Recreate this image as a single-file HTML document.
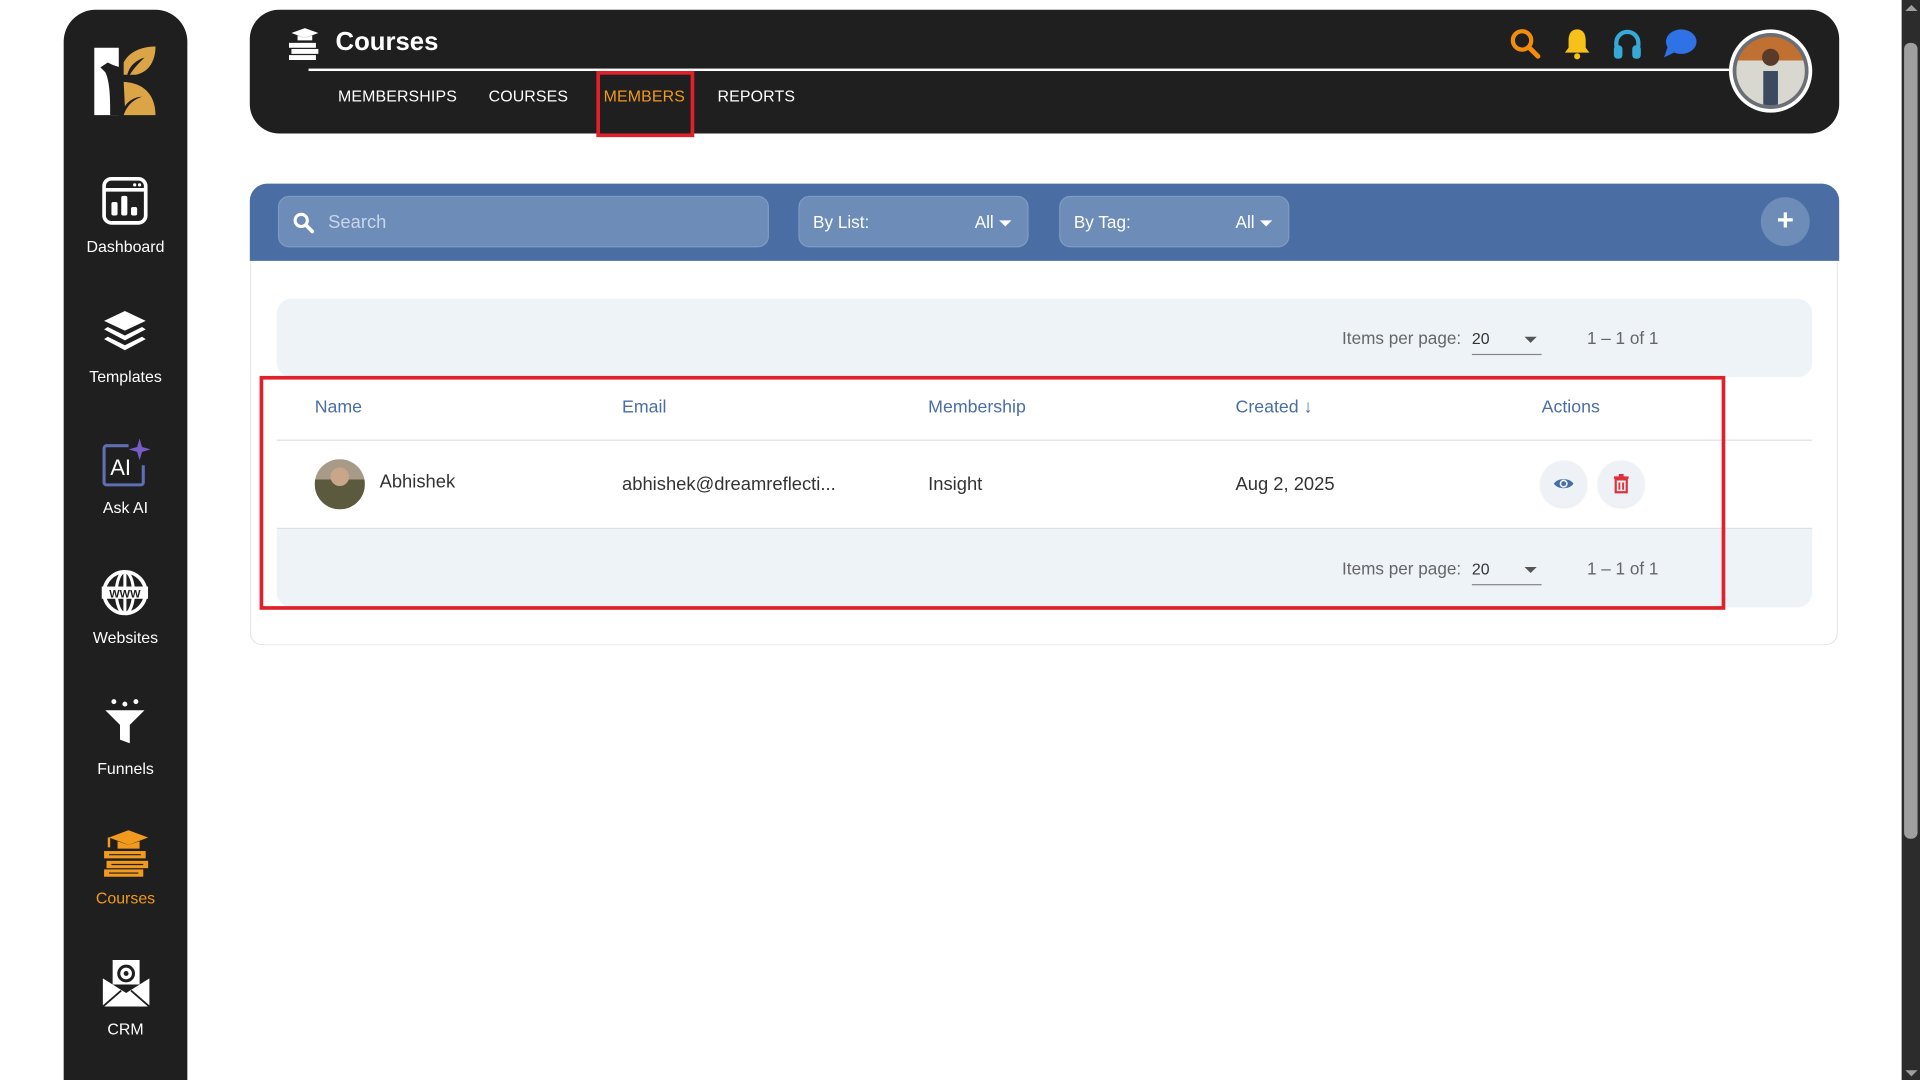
<!DOCTYPE html>
<html><head><meta charset="utf-8">
<style>
html,body{margin:0;padding:0;width:1920px;height:1080px;overflow:hidden;background:#fff;font-family:"Liberation Sans",sans-serif;}
#w{position:absolute;left:0;top:0;width:1568px;height:882px;transform:scale(1.22449);transform-origin:0 0;background:#fff;overflow:hidden;}
.a{position:absolute;}
.side{left:52px;top:8px;width:101px;height:900px;background:#1f1f1f;border-radius:26px 26px 0 0;}
.nl{position:absolute;left:52px;width:101px;text-align:center;color:#fff;font-size:13px;}
.hdr{left:204px;top:8px;width:1298px;height:101px;background:#1f1f1f;border-radius:24px;}
.tab{position:absolute;top:71px;color:#fff;font-size:13px;letter-spacing:0.1px;}
.bar{left:204px;top:150px;width:1298px;height:63px;background:#4a6ea4;border-radius:14px 14px 0 0;}
.fld{position:absolute;top:160px;height:42px;background:#6d8cb8;border:1px solid #7e9bc3;border-radius:9px;box-sizing:border-box;color:#fff;font-size:14px;}
.card{left:204px;top:213px;width:1297px;height:314px;border:1px solid #e6e8eb;border-top:none;border-radius:0 0 10px 10px;box-sizing:border-box;}
.pg{position:absolute;left:226px;width:1254px;height:64px;background:#eef3f7;border-radius:12px;}
.pt{position:absolute;font-size:14px;color:#666;}
.th{position:absolute;top:325px;font-size:14.5px;color:#4a6ea4;}
.td{position:absolute;top:387px;font-size:15px;color:#333;}
.hl{position:absolute;left:226px;width:1254px;height:1px;background:#e0e0e0;}
</style></head><body><div id="w">
<div class="a side"></div>
<svg class="a" style="left:76px;top:37px" width="54" height="58" viewBox="0 0 54 58">
<rect x="1" y="2" width="20" height="55" fill="#fff"/>
<path d="M6 18 L12 14 L16 16 L22 18 L22 57 L14 57 C14 45 14 30 10 22 Z" fill="#1f1f1f"/>
<path d="M25 14 C30 4 42 1 51 1 C51 12 46 22 35 24 L30 24 C34 18 38 14 42 10 C36 12 30 16 28 24 L25 24 Z" fill="#dba446"/>
<path d="M25 30 C36 30 51 36 51 57 L25 57 C28 48 34 44 40 42 C34 42 28 46 26 50 Z" fill="#dba446"/>
</svg>
<svg class="a" style="left:83px;top:144px" width="38" height="40" viewBox="0 0 38 40"><rect x="2" y="2" width="34" height="36" rx="6" fill="none" stroke="#fff" stroke-width="3"/><line x1="2" y1="11" x2="36" y2="11" stroke="#fff" stroke-width="3"/><circle cx="27" cy="7" r="1.3" fill="#fff"/><circle cx="31" cy="7" r="1.3" fill="#fff"/><rect x="8" y="21" width="5" height="11" rx="1.5" fill="#fff"/><rect x="16" y="16" width="5" height="16" rx="1.5" fill="#fff"/><rect x="24" y="25" width="5" height="7" rx="1.5" fill="#fff"/></svg>
<div class="nl" style="top:194px">Dashboard</div>
<svg class="a" style="left:84px;top:253px" width="36" height="34" viewBox="0 0 36 34"><path d="M18 1 L35 9 L18 17 L1 9Z" fill="#fff"/><path d="M4 14 L18 21 L32 14 L35 16 L18 25 L1 16Z" fill="#fff"/><path d="M4 22 L18 29 L32 22 L35 24 L18 33 L1 24Z" fill="#fff"/></svg>
<div class="nl" style="top:300px">Templates</div>
<svg class="a" style="left:83px;top:358px" width="40" height="40" viewBox="0 0 40 40"><path d="M22 6 H4 A2 2 0 0 0 2 8 V36 A2 2 0 0 0 4 38 H32 A2 2 0 0 0 34 36 V22" fill="none" stroke="#5f6fb4" stroke-width="2.5"/><text x="7" y="30" font-family="Liberation Sans" font-size="18" fill="#fff">AI</text><path d="M31 0 L33 7 L40 9 L33 11 L31 18 L29 11 L22 9 L29 7Z" fill="#7a5cc9"/></svg>
<div class="nl" style="top:407px">Ask AI</div>
<svg class="a" style="left:83px;top:465px" width="38" height="38" viewBox="0 0 38 38"><circle cx="19" cy="19" r="17" fill="none" stroke="#fff" stroke-width="3"/><ellipse cx="19" cy="19" rx="7" ry="17" fill="none" stroke="#fff" stroke-width="2.5"/><line x1="19" y1="2" x2="19" y2="36" stroke="#fff" stroke-width="2.5"/><rect x="0" y="14" width="38" height="10" fill="#fff"/><text x="19" y="23" text-anchor="middle" font-family="Liberation Sans" font-weight="bold" font-size="9" fill="#1f1f1f">WWW</text></svg>
<div class="nl" style="top:513px">Websites</div>
<svg class="a" style="left:85px;top:570px" width="34" height="38" viewBox="0 0 34 38"><circle cx="8" cy="3" r="2" fill="#fff"/><circle cx="17" cy="5" r="2" fill="#fff"/><circle cx="26" cy="3" r="2" fill="#fff"/><path d="M1 10 H33 L21 22 V37 L13 34 V22Z" fill="#fff"/></svg>
<div class="nl" style="top:620px">Funnels</div>
<svg class="a" style="left:83px;top:677px" width="40" height="40" viewBox="0 0 40 40"><path d="M6 7 L22 1 L38 7 L22 13Z" fill="#f29a1e"/><path d="M13 10 V16 H31 V10 L22 13Z" fill="#f29a1e"/><line x1="6" y1="7" x2="6" y2="15" stroke="#f29a1e" stroke-width="2"/><rect x="2" y="18" width="34" height="6" fill="#f29a1e"/><rect x="4" y="26" width="34" height="6" fill="#f29a1e"/><rect x="2" y="33" width="32" height="6" fill="#f29a1e"/><line x1="6" y1="21" x2="32" y2="21" stroke="#1f1f1f"/><line x1="8" y1="29" x2="34" y2="29" stroke="#1f1f1f"/><line x1="6" y1="36" x2="30" y2="36" stroke="#1f1f1f"/></svg>
<div class="nl" style="top:726px;color:#f29a1e">Courses</div>
<svg class="a" style="left:83px;top:783px" width="40" height="40" viewBox="0 0 40 40"><rect x="9" y="1" width="22" height="20" fill="#fff"/><circle cx="20" cy="12" r="6" fill="none" stroke="#1f1f1f" stroke-width="2.5"/><circle cx="20" cy="12" r="2" fill="#1f1f1f"/><path d="M1 16 L20 28 L39 16 V39 H1Z" fill="#fff"/><path d="M1 39 L16 26 M39 39 L24 26" stroke="#1f1f1f" stroke-width="1.5"/></svg>
<div class="nl" style="top:833px">CRM</div>

<div class="a hdr"></div>
<svg class="a" style="left:234px;top:22px" width="28" height="28" viewBox="0 0 28 28"><path d="M4 5 L15 1 L26 5 L15 9Z" fill="#fff"/><path d="M9 7 V11 H21 V7 L15 9Z" fill="#fff"/><rect x="2" y="13" width="22" height="4" fill="#fff"/><rect x="4" y="18" width="22" height="4" fill="#fff"/><rect x="2" y="23" width="22" height="4" fill="#fff"/></svg>
<div class="a" style="left:274px;top:23px;color:#fff;font-size:21px;font-weight:bold">Courses</div>
<div class="a" style="left:252px;top:56px;width:1165px;height:2px;background:#fff"></div>
<div class="tab" style="left:276px">MEMBERSHIPS</div>
<div class="tab" style="left:399px">COURSES</div>
<div class="tab" style="left:493px;color:#f29a1e">MEMBERS</div>
<div class="tab" style="left:586px">REPORTS</div>
<div class="a" style="left:487px;top:58px;width:80px;height:54px;border:3px solid #e0202a;box-sizing:border-box"></div>
<svg class="a" style="left:1233px;top:23px" width="26" height="26" viewBox="0 0 26 26"><circle cx="10" cy="10" r="7.5" fill="none" stroke="#f28c0f" stroke-width="3.5"/><line x1="15.5" y1="15.5" x2="23" y2="23" stroke="#f28c0f" stroke-width="4" stroke-linecap="round"/></svg>
<svg class="a" style="left:1277px;top:23px" width="22" height="26" viewBox="0 0 22 26"><path d="M11 1 C6 1 4 5 4 10 V16 L1 20 H21 L18 16 V10 C18 5 16 1 11 1Z" fill="#f5c11a"/><circle cx="11" cy="23" r="2.5" fill="#f5c11a"/></svg>
<svg class="a" style="left:1317px;top:23px" width="24" height="26" viewBox="0 0 24 26"><path d="M3 15 V12 A9 9 0 0 1 21 12 V15" fill="none" stroke="#36a9d9" stroke-width="3.5"/><rect x="1" y="14" width="7" height="11" rx="3" fill="#36a9d9"/><rect x="16" y="14" width="7" height="11" rx="3" fill="#36a9d9"/></svg>
<svg class="a" style="left:1358px;top:23px" width="28" height="26" viewBox="0 0 28 26"><ellipse cx="15" cy="11" rx="12.5" ry="10" fill="#2f72e6"/><path d="M4 15 L1 24 L11 19Z" fill="#2f72e6"/></svg>
<div class="a" style="left:1412px;top:24px;width:68px;height:68px;border-radius:50%;background:#fff"></div>
<div class="a" style="left:1415px;top:27px;width:62px;height:62px;border-radius:50%;background:#6b6f75"></div>
<div class="a" style="left:1418px;top:30px;width:56px;height:56px;border-radius:50%;background:radial-gradient(circle at 50% 30%,#5a3b2a 0 14%,transparent 15%),linear-gradient(180deg,#c07030 0 35%,#d8d8d0 35% 100%);overflow:hidden"><div style="position:absolute;left:22px;top:28px;width:12px;height:30px;background:#3b4a5e"></div></div>

<div class="a bar"></div>
<div class="fld" style="left:227px;width:401px;color:#c9d6ea"><svg style="position:absolute;left:11px;top:12px" width="18" height="18" viewBox="0 0 18 18"><circle cx="7" cy="7" r="5" fill="none" stroke="#fff" stroke-width="2.5"/><line x1="11" y1="11" x2="16" y2="16" stroke="#fff" stroke-width="3" stroke-linecap="round"/></svg><span style="position:absolute;left:40px;top:12px;font-size:15px">Search</span></div>
<div class="fld" style="left:652px;width:188px"><span style="position:absolute;left:11px;top:12px">By List:</span><span style="position:absolute;left:143px;top:12px">All</span><span style="position:absolute;left:163px;top:19px;border:5px solid transparent;border-top-color:#fff;border-bottom:0"></span></div>
<div class="fld" style="left:865px;width:188px"><span style="position:absolute;left:11px;top:12px">By Tag:</span><span style="position:absolute;left:143px;top:12px">All</span><span style="position:absolute;left:163px;top:19px;border:5px solid transparent;border-top-color:#fff;border-bottom:0"></span></div>
<div class="a" style="left:1438px;top:161px;width:40px;height:40px;border-radius:50%;background:#6d8cb8;color:#fff;font-size:24px;font-weight:bold;text-align:center;line-height:40px">+</div>

<div class="a card"></div>
<div class="pg" style="top:244px"></div>
<div class="pt" style="left:1096px;top:268px">Items per page:</div>
<div class="pt" style="left:1202px;top:269px;font-size:13px;color:#333">20</div>
<div class="a" style="left:1245px;top:275px;border:5px solid transparent;border-top-color:#555;border-bottom:0"></div>
<div class="a" style="left:1202px;top:289px;width:57px;height:1px;background:#888"></div>
<div class="pt" style="left:1296px;top:268px">1 – 1 of 1</div>

<div class="th" style="left:257px">Name</div>
<div class="th" style="left:508px">Email</div>
<div class="th" style="left:758px">Membership</div>
<div class="th" style="left:1009px">Created <span style="font-weight:bold">&#8595;</span></div>
<div class="th" style="left:1259px">Actions</div>
<div class="hl" style="top:359px"></div>
<div class="a" style="left:257px;top:375px;width:41px;height:41px;border-radius:50%;background:radial-gradient(circle at 50% 35%,#c9a58a 0 22%,transparent 23%),linear-gradient(180deg,#a89a88 0 40%,#5b5a3e 40% 100%)"></div>
<div class="td" style="left:310px;top:385px">Abhishek</div>
<div class="td" style="left:508px">abhishek@dreamreflecti...</div>
<div class="td" style="left:758px">Insight</div>
<div class="td" style="left:1009px">Aug 2, 2025</div>
<div class="a" style="left:1258px;top:376px;width:38px;height:38px;border-radius:50%;background:#eef2f6;box-shadow:0 1px 2px rgba(0,0,0,.1)"><svg style="position:absolute;left:10px;top:12px" width="18" height="14" viewBox="0 0 18 14"><path d="M1 7 C4 2 14 2 17 7 C14 12 4 12 1 7Z" fill="#4a6ea4"/><circle cx="9" cy="7" r="3.3" fill="#eef2f6"/><circle cx="9" cy="7" r="2" fill="#4a6ea4"/></svg></div>
<div class="a" style="left:1305px;top:376px;width:38px;height:38px;border-radius:50%;background:#eef2f6;box-shadow:0 1px 2px rgba(0,0,0,.1)"><svg style="position:absolute;left:12px;top:11px" width="14" height="16" viewBox="0 0 14 16"><path d="M5 1 H9 M1 3 H13" stroke="#e0303a" stroke-width="2"/><rect x="2.5" y="4.5" width="9" height="10.5" fill="none" stroke="#e0303a" stroke-width="1.8"/><path d="M5.5 7 V13 M8.5 7 V13" stroke="#e0303a" stroke-width="1.5"/></svg></div>
<div class="hl" style="top:431px"></div>
<div class="pg" style="top:432px;border-radius:0 0 12px 12px"></div>
<div class="pt" style="left:1096px;top:456px">Items per page:</div>
<div class="pt" style="left:1202px;top:457px;font-size:13px;color:#333">20</div>
<div class="a" style="left:1245px;top:463px;border:5px solid transparent;border-top-color:#555;border-bottom:0"></div>
<div class="a" style="left:1202px;top:477px;width:57px;height:1px;background:#888"></div>
<div class="pt" style="left:1296px;top:456px">1 – 1 of 1</div>
<div class="a" style="left:212px;top:307px;width:1197px;height:191px;border:3px solid #e0202a;box-sizing:border-box"></div>

<div class="a" style="left:1553px;top:0;width:15px;height:882px;background:#2c2c2c"></div>
<div class="a" style="left:1555px;top:35px;width:11px;height:650px;border-radius:5px;background:#9f9f9f"></div>
<div class="a" style="left:1556px;top:4px;border:5px solid transparent;border-bottom-color:#9f9f9f;border-top:0"></div>
<div class="a" style="left:1556px;top:874px;border:5px solid transparent;border-top-color:#9f9f9f;border-bottom:0"></div>
</div></body></html>
